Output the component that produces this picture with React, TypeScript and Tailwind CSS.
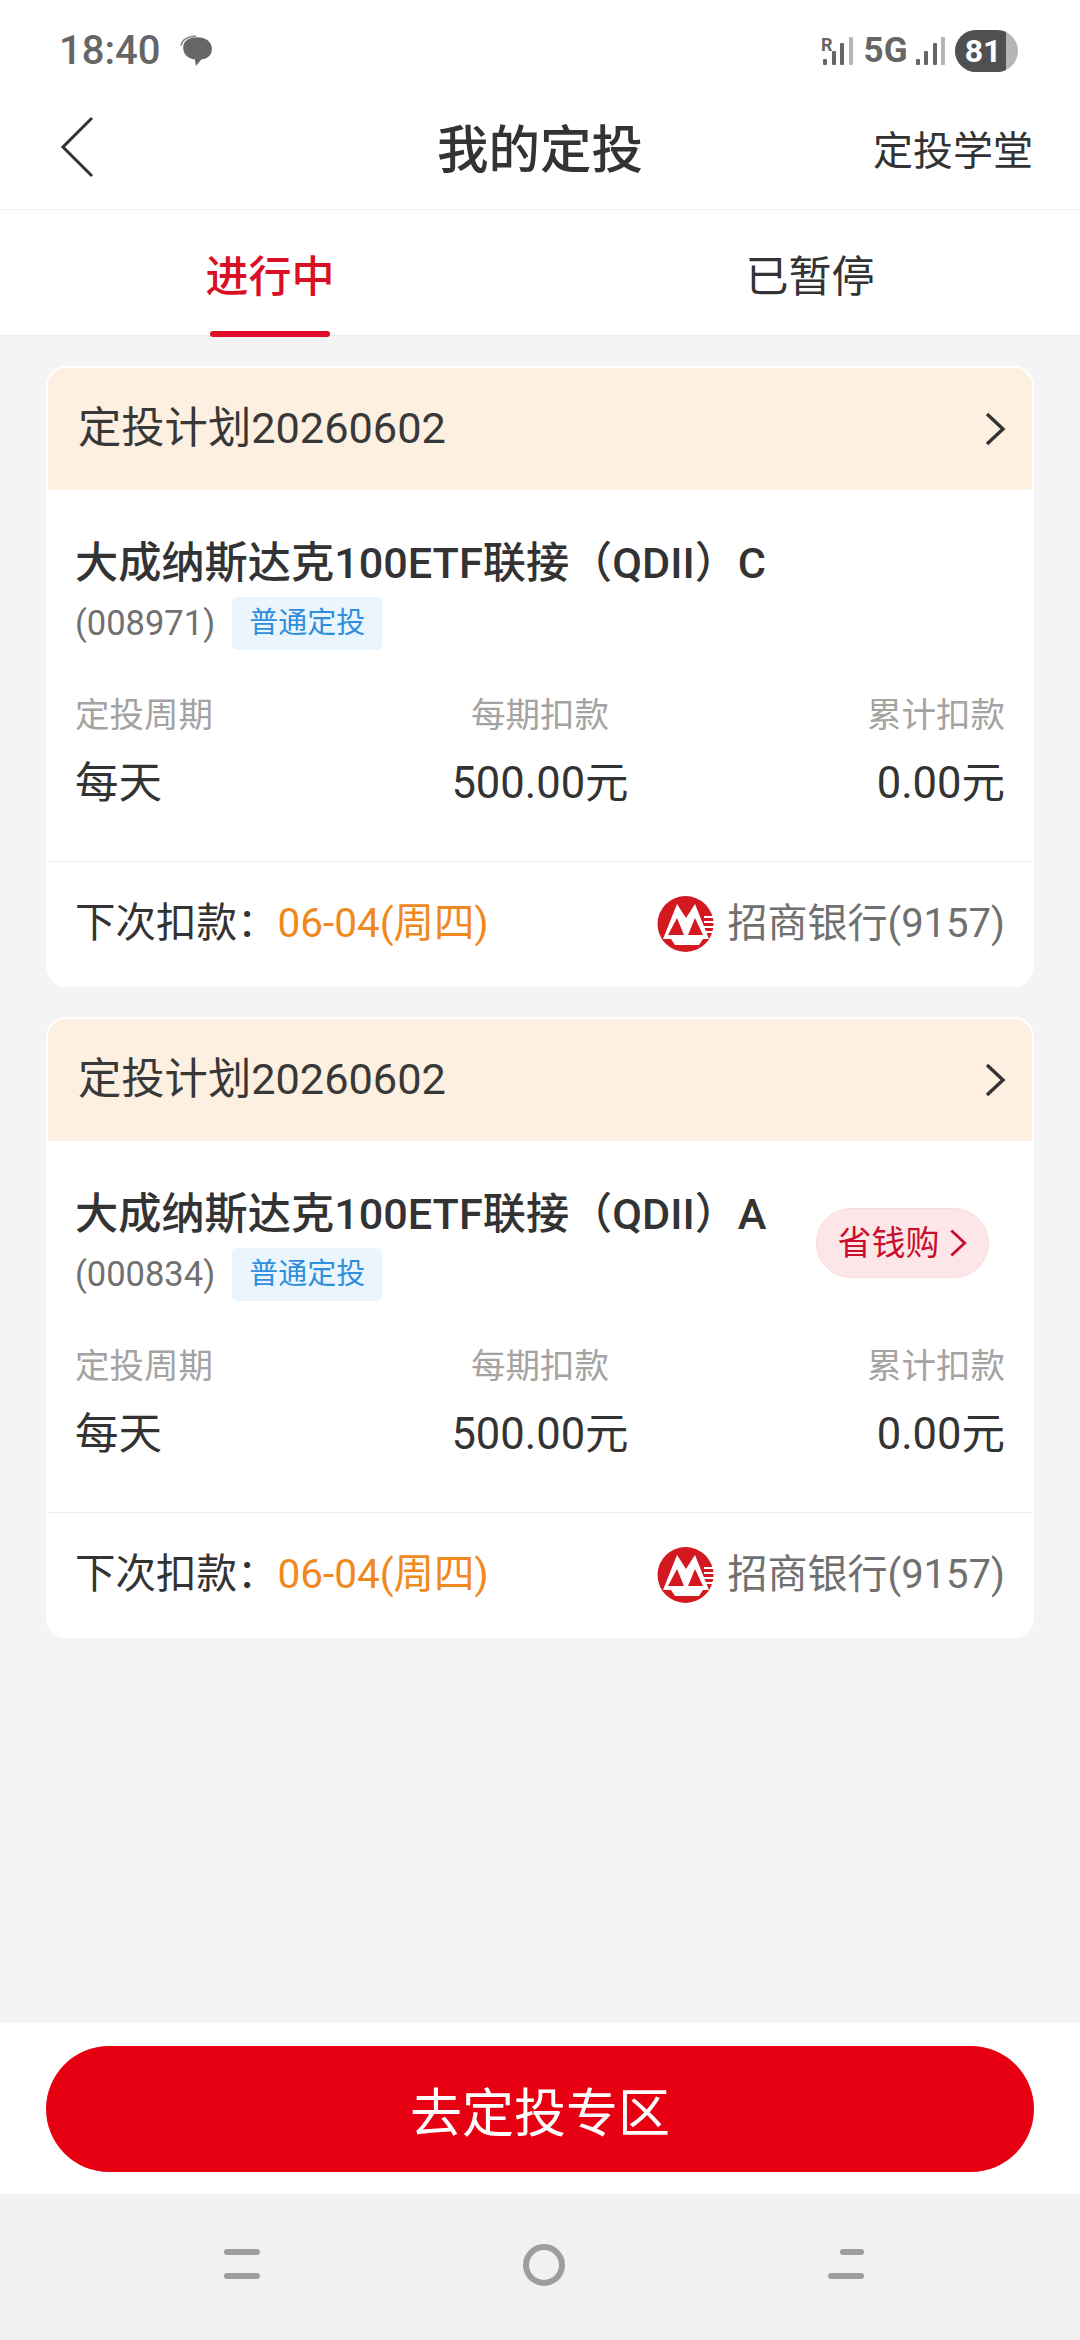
const Chevron = ({ className }: { className: string }) => (
  <svg viewBox="0 0 24 36" className={className} fill="none" stroke="currentColor" strokeWidth="3.4">
    <path d="M4 3 L20 18 L4 33" />
  </svg>
);

const Bars = () => (
  <div className="flex items-end gap-[4.5px] h-[28px]">
    {[6, 14, 22, 28].map((h, i) => (
      <div
        key={h}
        className={i < 3 ? "w-[4px] bg-[#666666] rounded-[1px]" : "w-[4px] bg-[#b5b5b5] rounded-[1px]"}
        style={{ height: h }}
      />
    ))}
  </div>
);

const CmbLogo = () => (
  <svg viewBox="0 0 58 58" className="w-[58px] h-[58px] shrink-0">
    <circle cx="28.5" cy="29" r="28" fill="#d3181f" />
    <path d="M6 44 L20 9 L29 23 L38 9 L52 44 Z" fill="#ffffff" />
    <path d="M11 40 L20 23 L27 40 Z M31 40 L38 23 L46 40 Z" fill="#d3181f" />
    <path d="M14 44 L46 44 L42 50 L18 50 Z" fill="#ffffff" />
    <g fill="#ffffff">
      <rect x="47" y="21" width="11" height="2" />
      <rect x="47" y="26" width="11" height="2" />
      <rect x="47" y="31" width="11" height="2" />
      <rect x="47" y="36" width="11" height="2" />
    </g>
  </svg>
);

const Stat = ({ label, value, align }: { label: string; value: string; align: string }) => (
  <div className={align}>
    <div className="text-[34.5px] leading-[48px] text-[#a3a3a3]">{label}</div>
    <div className="mt-[17px] text-[43.5px] leading-[56px] text-[#333333]">{value}</div>
  </div>
);

const PlanCard = ({ suffix, code, promo }: { suffix: string; code: string; promo?: boolean }) => (
  <section className="rounded-[20px] bg-white border-2 border-white overflow-hidden">
    <div className="h-[122px] bg-[#fdf0e0] flex items-center justify-between pl-[30px] pr-[25px]">
      <span className="text-[43.3px] text-[#383838]">定投计划20260602</span>
      <Chevron className="w-[24px] h-[36px] text-[#333333]" />
    </div>
    <div className="relative pl-[27px] pr-[27px] pt-[46px]">
      <div className="text-[43.2px] leading-[56px] font-medium text-[#333333] whitespace-nowrap">
        大成纳斯达克100ETF联接（QDII）{suffix}
      </div>
      <div className="flex items-center mt-[5px] h-[53px]">
        <span className="text-[34.5px] text-[#707070]">({code})</span>
        <span className="ml-[17px] w-[150px] h-[53px] rounded-[5px] bg-[#ebf5fd] text-[#2f8fdc] text-[29px] flex items-center justify-center">
          普通定投
        </span>
      </div>
      {promo && (
        <div className="absolute right-[43px] top-[67px] w-[173px] h-[70px] rounded-full bg-[#fde6e8] border border-[#fbd9dc] flex items-center justify-center gap-[8px] text-[#c8102e] text-[34px]">
          <span>省钱购</span>
          <Chevron className="w-[20px] h-[30px]" />
        </div>
      )}
      <div className="grid grid-cols-3 mt-[41px] pb-[49px]">
        <Stat label="定投周期" value="每天" align="text-left" />
        <Stat label="每期扣款" value="500.00元" align="text-center" />
        <Stat label="累计扣款" value="0.00元" align="text-right" />
      </div>
    </div>
    <div className="border-t border-[#eeeeee] h-[124px] pl-[27px] pr-[27px] flex items-center justify-between text-[40.5px]">
      <div className="text-[#333333] whitespace-nowrap">
        下次扣款：<span className="text-[#f0891d]">06-04(周四)</span>
      </div>
      <div className="flex items-center gap-[12px] text-[#707070] text-[40px] whitespace-nowrap">
        <CmbLogo />
        <span>招商银行(9157)</span>
      </div>
    </div>
  </section>
);

export default function App() {
  return (
    <div className="w-[1080px] h-[2340px] flex flex-col bg-[#f4f4f4] font-['Roboto','Noto_Sans_CJK_SC',sans-serif] overflow-hidden">
      <div className="bg-white">
        <div className="h-[92px] pl-[59px] pr-[62px] pt-[9px] flex items-center justify-between">
          <div className="flex items-center gap-[20px] text-[#666666]">
            <span className="text-[40px] font-medium">18:40</span>
            <svg viewBox="0 0 32 30" className="w-[34px] h-[32px]">
              <path d="M3 12 C3 5 9 2 16 2 C24 2 30 6 30 13 C30 19 26 22 20 23 L15 29 L14 23 C7 22 3 18 3 12 Z" fill="#666666" />
              <path d="M1 10 C2 4 8 1 15 1" stroke="#888888" strokeWidth="1.5" fill="none" />
            </svg>
          </div>
          <div className="flex items-center">
            <div className="relative">
              <span className="absolute left-[-2px] top-[-1px] text-[18px] leading-[18px] font-bold text-[#666666]">R</span>
              <Bars />
            </div>
            <span className="ml-[11px] text-[35px] leading-[38px] font-bold text-[#666666]">5G</span>
            <div className="ml-[8px]">
              <Bars />
            </div>
            <div className="ml-[10px] w-[63px] h-[42px] rounded-full bg-[#b5b5b5] overflow-hidden">
              <div className="w-[51px] h-[42px] bg-[#505050] flex items-center justify-center pl-[5px] text-white text-[32px] font-bold">
                81
              </div>
            </div>
          </div>
        </div>
        <div className="h-[118px] relative flex items-center justify-center border-b border-[#f1f1f1]">
          <svg viewBox="0 0 34 62" className="absolute left-[60px] top-[24px] w-[34px] h-[62px]" fill="none" stroke="#333333" strokeWidth="3">
            <path d="M32 2 L3 31 L32 60" />
          </svg>
          <span className="text-[51.5px] font-medium text-[#333333]">我的定投</span>
          <span className="absolute right-[47px] top-[30px] text-[40px] text-[#333333]">定投学堂</span>
        </div>
        <div className="h-[126px] grid grid-cols-2 border-b border-[#eeeeee]">
          <div className="relative flex justify-center pt-[35px] text-[43px] font-medium text-[#d90f25]">
            <span>进行中</span>
            <div className="absolute left-[210px] bottom-[-2px] w-[120px] h-[6px] rounded-full bg-[#e00d26]" />
          </div>
          <div className="flex justify-center pt-[35px] text-[43px] text-[#333333]">已暂停</div>
        </div>
      </div>

      <main className="flex-1 px-[46px] pt-[30px] flex flex-col gap-[30px]">
        <PlanCard suffix="C" code="008971" />
        <PlanCard suffix="A" code="000834" promo />
      </main>

      <div className="h-[171px] bg-white px-[46px] pt-[23px]">
        <button className="w-[988px] h-[126px] rounded-full bg-[#e60012] text-white text-[52px] pt-[12px] flex items-center justify-center">
          去定投专区
        </button>
      </div>

      <div className="h-[146px] bg-[#f1f1f3] flex items-start justify-between pl-[224px] pr-[216px] pt-[55px]">
        <div className="w-[36px] flex flex-col gap-[18px]">
          <div className="h-[6px] rounded-full bg-[#9e9e9e]" />
          <div className="h-[6px] rounded-full bg-[#9e9e9e]" />
        </div>
        <div className="w-[42px] h-[42px] rounded-full border-[6px] border-[#9e9e9e] -mt-[5px]" />
        <div className="w-[36px] flex flex-col items-end gap-[18px]">
          <div className="w-[24px] h-[6px] rounded-full bg-[#9e9e9e]" />
          <div className="w-[36px] h-[6px] rounded-full bg-[#9e9e9e]" />
        </div>
      </div>
    </div>
  );
}
